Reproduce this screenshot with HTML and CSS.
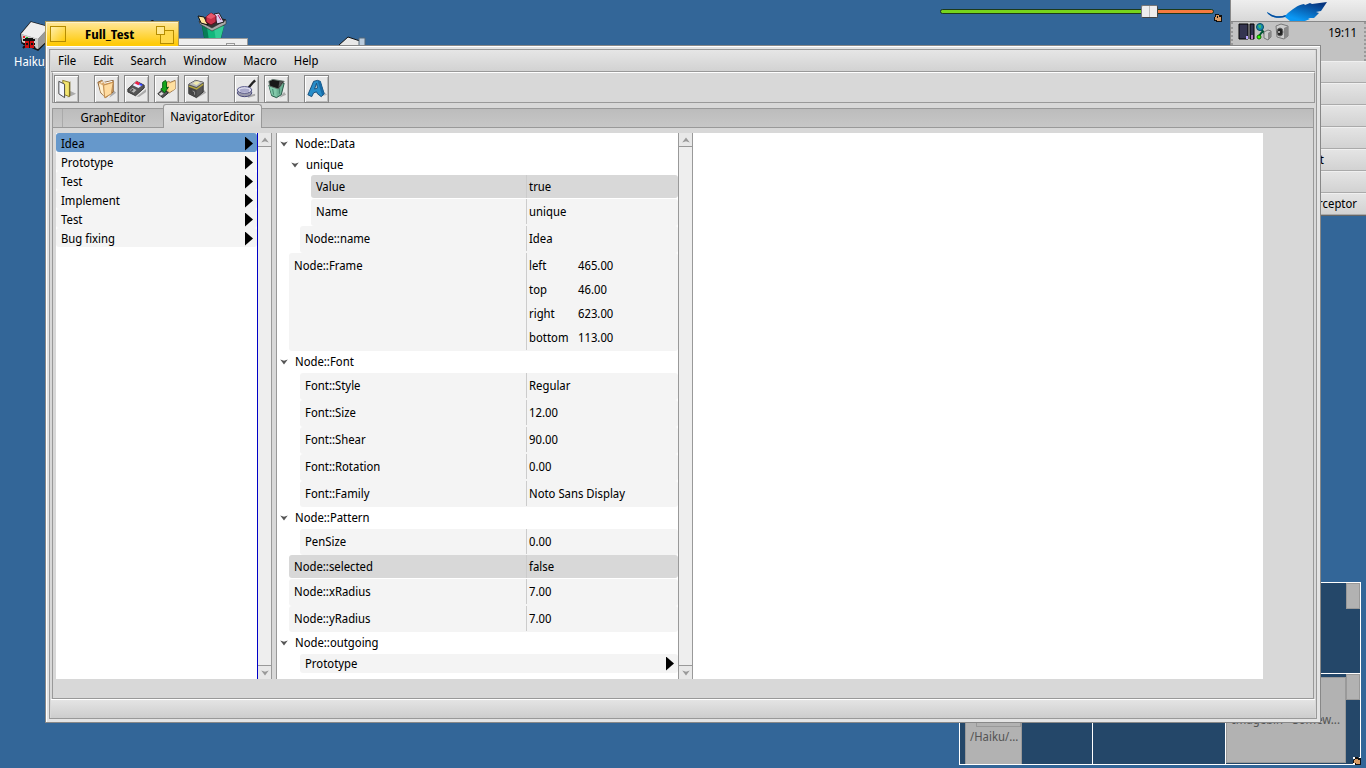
FILE: index.html
```html
<!DOCTYPE html>
<html lang="en">
<head>
<meta charset="utf-8">
<title>Full_Test</title>
<link rel="stylesheet" href="styles.css">
</head>
<body>
<div class="desktop">
  <a class="volume" href="#haiku">
    <svg width="32" height="32" viewBox="0 0 32 32" aria-hidden="true"><path d="M2 14 12 2 30 7V19L19 30 3 23Z" fill="#777" stroke="#151515" stroke-width="1.500"/><path d="M2 14 12 2 30 7 19 19Z" fill="#eee"/><path d="m19 19 11-12v12L19 29Z" fill="#999"/><path d="m2 14 17 5v10L3 22Z" fill="#ccc"/><path d="M4 16h2v2H4Z" fill="#e22"/><path d="M7 17h2v2H7Z" fill="#2b2"/><path d="M4 20h3v-1h6v1h3m-12 4h12m-12 4 2-2m10 2-2-2" fill="none" stroke="#111" stroke-width="2"/><path d="M6 21h9v7H6Z" fill="#c11"/><path d="M7 19h6v2H7Zm3 2h1v7h-1Zm-3 2h2v2H7Zm5 0h2v2h-2Z" fill="#111"/></svg>
    <span>Haiku_</span>
  </a>
  <svg class="trash" width="30" height="30" viewBox="0 0 30 30" aria-label="Trash" role="img"><path d="M5 13 8 30H23L27 13Z" fill="#12b77c" stroke="#063"/><path d="m5 13 5 3 2 14H8Z" fill="#087c58"/><path d="m17 17 2 13h4l4-15Z" fill="#32cc94"/><path d="M2 11 12 4 29 9 15 18Z" fill="#333" stroke="#222"/><path d="m2 10 13 7L29 9v4l-14 7L3 13Z" fill="#aaa" stroke="#333" stroke-width=".6"/><path d="M1 5 7 6 11 14 4 12Z" fill="#ffe49a" stroke="#111"/><path d="m17 3 5-1 5 9-7 2Z" fill="#dce" stroke="#222"/><path d="m9 6 5-4 5 3v6l-5 3-5-3Z" fill="#c93048" stroke="#5b1020"/><path d="m9 6 5-4 5 3-5 3Z" fill="#e8586c"/><path d="m21 4 3 5" stroke="#b26"/></svg>
  <svg class="disk" width="30" height="12" viewBox="0 0 30 12" aria-hidden="true"><path d="M1 10 10 2l12 4v6H1Z" fill="#e8e8e8" stroke="#111"/><path d="M21 3h6v8h-6Z" fill="#bcd" stroke="#567"/></svg>
  <svg class="speck" width="10" height="5" viewBox="0 0 10 5" aria-hidden="true"><path d="M3 4Q5 0 8 4Z" fill="#111"/></svg>
  <div class="volume-slider">
    <input type="range" aria-label="Volume" min="0" max="200" value="157">
    <svg class="hand" width="8" height="8" viewBox="0 0 8 8"><path d="M1 0h4v1h3v7H2V7H0V3h1Z" fill="#111"/><path d="M1 3h1V1h3v2h2v4H3V6H1Z" fill="#d99b64"/><path d="M3 2h1v2H3Z" fill="#111"/></svg>
  </div>

  <div class="workspaces" aria-label="Workspaces">
    <div class="ws"></div><div class="ws"></div><div class="ws"><i class="mini-bar"></i></div>
    <div class="ws"><div class="mini mini-left"><i></i>/Haiku/...</div></div>
    <div class="ws"></div>
    <div class="ws"><div class="mini mini-right">Imagebin - Somew...</div><i class="mini-bar"></i></div>
    <svg class="hand ws-hand" width="8" height="8" viewBox="0 0 8 8"><path d="M1 0h4v1h3v7H2V7H0V3h1Z" fill="#111"/><path d="M0 0h2v2H0Zm0 6h2v2H0Zm6-6h2v1H6Z" fill="#fff"/><path d="M1 3h1V2h3v1h2v4H3V6H1Z" fill="#d99b64"/></svg>
  </div>

  <aside class="deskbar">
    <button class="leaf" aria-label="Deskbar menu"><svg width="62" height="19" viewBox="0 0 62 19"><defs><linearGradient id="lg" x1="0" y1="1" x2="1" y2="0"><stop offset=".3" stop-color="#0a98f4"/><stop offset=".9" stop-color="#06347e"/></linearGradient></defs><path d="M1 10C8 15 14 15 20 13 26 7 32 3 38 2l1 1 5-2 2 1 15-2-6 9-5 1 3 1-5 5h-6l2 1-5 2H24l-5-4C12 17 3 15 1 10Z" fill="url(#lg)"/><path d="M1 10C8 15 14 15 20 13l-1 2C12 17 3 15 1 10Z" fill="#0a4a98"/></svg></button>
    <div class="tray">
      <svg width="52" height="18" viewBox="0 0 52 18" aria-hidden="true"><path d="M1 1h9v15H1Zm11 0h4v15h-4Z" fill="#343450" stroke="#000"/><path d="M8 13h2v3H8Z" fill="#b9a6ff"/><path d="M13 12h2v4h-2Z" fill="#b679bd"/><path d="m22 5 5 6m-6 2 3-4" stroke="#053" fill="none" stroke-width="2"/><circle cx="22" cy="4" r="3.500" fill="#168bb0" stroke="#064b60"/><path d="M20 2h3v3h-2Z" fill="#3bb86a"/><circle cx="21" cy="14" r="2" fill="#3f0" stroke="#160"/><path d="m26 9 4-2 3 1v6l-3 3-4-2Z" fill="#ccc" stroke="#777"/><path d="m30 10 3-2v6l-3 3Z" fill="#888"/><path d="m38 3 5-2 7 2v10l-4 3-7-2Z" fill="#ccc" stroke="#777"/><path d="m46 5 4-2v10l-4 3Z" fill="#888"/><ellipse cx="42" cy="9" rx="3" ry="4" fill="#222" stroke="#666"/><circle cx="41" cy="9" r="1" fill="#ccc"/></svg>
      <time>19:11</time>
    </div>
    <ul class="apps"><li></li><li></li><li></li><li></li><li>Text Edit t</li><li></li><li>Interceptor</li></ul>
  </aside>

  <div class="back-window"><i></i></div>

  <main class="window">
    <header class="tab">
      <button class="close" aria-label="Close"></button>
      <h1>Full_Test</h1>
      <button class="zoom" aria-label="Zoom"><i></i></button>
    </header>
    <div class="frame">
      <div class="inner">
        <nav class="menubar"><button>File</button><button>Edit</button><button>Search</button><button>Window</button><button>Macro</button><button>Help</button></nav>
        <div class="toolbar">
          <button aria-label="New"><svg viewBox="0 0 24 24"><path d="m13 21 9-4-6-3Z" fill="#aaa"/><path d="m8 3 7 2v15l-5-2Z" fill="#f3e571" stroke="#8c7d2a"/><path d="m15 5 1-1v15l-1 1Z" fill="#6b5e1c"/><path d="m4 4 6 3v14l-6-4Z" fill="#f4f6ff" stroke="#444"/></svg></button>
          <button class="far" aria-label="Open"><svg viewBox="0 0 24 24"><path d="m15 21 7-5-3-3Z" fill="#aaa"/><path d="m3 5 4-2 3 2 9-2v12l-8 6-5-5Z" fill="#d9a86b" stroke="#8a6034"/><path d="m4 6 4 2 2 12-4-5Z" fill="#fff0d0"/><path d="m6 6 3-2 1 2 8-2" fill="none" stroke="#fff"/><path d="m9 8 10-3-2 12-7 4Z" fill="#ffdb9f" stroke="#c18d4f"/></svg></button>
          <button aria-label="Save"><svg viewBox="0 0 24 24"><path d="m12 20 10-8v3l-7 5Z" fill="#aaa"/><path d="m3 12 9-8 8 4v3l-9 8-8-4Z" fill="#555" stroke="#333"/><path d="m8 8 4-4 6 4-4 3Z" fill="#eef"/><path d="m10 6 2-2 4 2-2 2Z" fill="#e24"/><path d="m15 7 3 1" stroke="#34f" stroke-width="2"/><path d="m5 13 3-2 4 2-3 3Z" fill="#bbb"/><path d="m6 13 2-1 1 1-2 1Z" fill="#333"/></svg></button>
          <button aria-label="Save as"><svg viewBox="0 0 24 24"><path d="m11 6 3-2 2 1 5-2v9l-6 4-4-3Z" fill="#f5c985" stroke="#9b7548"/><path d="m14 7 7-3v8l-6 3Z" fill="#ffe0a0"/><path d="m3 17 5-5 6 4-6 5Z" fill="#555" stroke="#222"/><path d="m4 17 3-2 2 2-3 2Z" fill="#ddd"/><path d="M8 5 11 3l1 2v6l2-1-4 6-4-4 2-1Z" fill="#16a61b" stroke="#075d12"/></svg></button>
          <button aria-label="Package"><svg viewBox="0 0 24 24"><path d="m13 21 9-5-2-3Z" fill="#aaa"/><path d="M4 7 11 3l8 2v10l-7 6-8-4Z" fill="#555" stroke="#333"/><path d="m4 7 7-4 8 2-7 5Z" fill="#bbb"/><path d="m8 6 4-2 4 1-4 3Z" fill="#eee9b0"/><path d="m4 9 8 3v8l-8-4Z" fill="#444"/><path d="m4 9 8 3 7-5" fill="none" stroke="#b5a73d" stroke-width="1.500"/><path d="m8 14 2 1v3" stroke="#999" fill="none"/></svg></button>
          <button class="group" aria-label="Pan"><svg viewBox="0 0 24 24"><path d="m12 19 9-2v2l-7 2Z" fill="#aaa"/><path d="m13 12 5-6 3-3" stroke="#222" stroke-width="2.500" fill="none"/><ellipse cx="10" cy="16" rx="7.500" ry="4" fill="#99a" stroke="#447"/><ellipse cx="10" cy="13" rx="7.500" ry="3.500" fill="#dde" stroke="#558"/><ellipse cx="10" cy="13.500" rx="5" ry="2" fill="#aac"/></svg></button>
          <button aria-label="Delete"><svg viewBox="0 0 24 24"><path d="m15 21 7-3-2-3Z" fill="#aaa"/><path d="m4 8 3 11 5 2 5-3 3-12Z" fill="#6eb497" stroke="#245443"/><path d="m4 8 8 3v9l-5-2Z" fill="#82c9aa"/><path d="m8 12 1 6m6-8v7" stroke="#3f836b"/><path d="m4 4 4-2 12 2-6 8-9-3Z" fill="#181818" stroke="#65776f"/><path d="m15 4 4 0-5 7Z" fill="#555"/></svg></button>
          <button class="far" aria-label="Font"><svg viewBox="0 0 24 24"><path d="m16 20 7-2-3-3Z" fill="#bbb"/><path fill-rule="evenodd" d="M3 18 9 4l4-1 3 1 4 13-3 3-4-3-1-2-3 1-2 4Zm7-6 3-1-1-5Z" fill="#278dc9" stroke="#174c78"/><path d="m13 3 3 1 4 13-2 2Z" fill="#196ba6"/></svg></button>
        </div>
        <section class="tabview">
          <div class="tabs" role="tablist"><button role="tab" aria-selected="false">GraphEditor</button><button role="tab" aria-selected="true" class="active">NavigatorEditor</button></div>
          <div class="panes">
            <ul class="list">
              <li class="on">Idea<b></b></li><li>Prototype<b></b></li><li>Test<b></b></li><li>Implement<b></b></li><li>Test<b></b></li><li>Bug fixing<b></b></li>
            </ul>
            <div class="scroll"><button aria-label="Up"><svg viewBox="0 0 8 8"><path d="m1 6 3-4 3 4-3-1Z"/></svg></button><button aria-label="Down"><svg viewBox="0 0 8 8"><path d="m1 2 3 4 3-4-3 1Z"/></svg></button></div>
            <div class="tree">
              <div class="head"><svg viewBox="0 0 8 8"><path d="m1 2 3 4 3-4-3 1Z"/></svg>Node::Data</div>
              <div class="head sub"><svg viewBox="0 0 8 8"><path d="m1 2 3 4 3-4-3 1Z"/></svg>unique</div>
              <div class="row deep dark"><span>Value</span><span class="val">true</span></div>
              <div class="row deep"><span>Name</span><span class="val">unique</span></div>
              <div class="row nest"><span>Node::name</span><span class="val">Idea</span></div>
              <div class="row tall"><span>Node::Frame</span><dl class="val"><dt>left</dt><dd>465.00</dd><dt>top</dt><dd>46.00</dd><dt>right</dt><dd>623.00</dd><dt>bottom</dt><dd>113.00</dd></dl></div>
              <div class="head"><svg viewBox="0 0 8 8"><path d="m1 2 3 4 3-4-3 1Z"/></svg>Node::Font</div>
              <div class="row nest"><span>Font::Style</span><span class="val">Regular</span></div>
              <div class="row nest"><span>Font::Size</span><span class="val">12.00</span></div>
              <div class="row nest"><span>Font::Shear</span><span class="val">90.00</span></div>
              <div class="row nest"><span>Font::Rotation</span><span class="val">0.00</span></div>
              <div class="row nest last"><span>Font::Family</span><span class="val">Noto Sans Display</span></div>
              <div class="head"><svg viewBox="0 0 8 8"><path d="m1 2 3 4 3-4-3 1Z"/></svg>Node::Pattern</div>
              <div class="row nest last"><span>PenSize</span><span class="val">0.00</span></div>
              <div class="row dark"><span>Node::selected</span><span class="val">false</span></div>
              <div class="row"><span>Node::xRadius</span><span class="val">7.00</span></div>
              <div class="row last"><span>Node::yRadius</span><span class="val">7.00</span></div>
              <div class="head"><svg viewBox="0 0 8 8"><path d="m1 2 3 4 3-4-3 1Z"/></svg>Node::outgoing</div>
              <div class="row nest link"><span>Prototype</span><b></b></div>
            </div>
            <div class="scroll"><button aria-label="Up"><svg viewBox="0 0 8 8"><path d="m1 6 3-4 3 4-3-1Z"/></svg></button><button aria-label="Down"><svg viewBox="0 0 8 8"><path d="m1 2 3 4 3-4-3 1Z"/></svg></button></div>
            <div class="canvas"></div>
          </div>
        </section>
        <footer class="status"></footer>
      </div>
    </div>
  </main>
</div>
</body>
</html>
```
FILE: styles.css
```css
* { box-sizing: border-box; }
body { margin: 0; font: 12px/16px "Noto Sans Display", "Noto Sans", "Open Sans", sans-serif; color: #000; }
button { font: inherit; color: inherit; border: 0; padding: 0; margin: 0; background: none; }
ul, dl, dd, h1 { margin: 0; padding: 0; list-style: none; }
.desktop { position: relative; min-height: 100vh; background: #336698; overflow: hidden; }

/* desktop icons */
.volume { position: absolute; left: 14px; top: 20px; color: #fff; text-decoration: none; display: flex; flex-direction: column; }
.volume svg { margin-left: 5px; }
.volume span { line-height: 20px; }
.trash { position: absolute; left: 197px; top: 11px; }
.disk { position: absolute; left: 338px; top: 35px; }
.speck { position: absolute; left: 147px; top: 18px; }
.volume-slider { position: absolute; right: 144px; top: 2px; width: 282px; display: flex; align-items: flex-end; }
.volume-slider input { appearance: none; flex: 1; height: 18px; margin: 0 0 2px; background: none; }
.volume-slider input::-webkit-slider-runnable-track { height: 5px; border: 1px solid #1d3a1a; border-radius: 3px; background: linear-gradient(90deg, #76d51c 77%, #f67a3f 77%); }
.volume-slider input::-webkit-slider-thumb { appearance: none; width: 17px; height: 13px; margin-top: -5px; background: linear-gradient(90deg, transparent 7px, #bbb 7px, #bbb 8px, transparent 8px), #eee; border: 1px solid #777; border-right-color: #444; border-bottom-color: #444; border-radius: 2px; }

/* workspaces replicant */
.workspaces { position: absolute; right: 5px; bottom: 3px; width: 402px; height: 183px; display: grid; grid-template-columns: 132px 132px 1fr; grid-template-rows: 1fr 1fr; gap: 1px; border: 1px solid #fff; background: #fff; }
.ws { position: relative; background: #244769; overflow: hidden; }
.mini { position: absolute; background: #b2b2b2; color: #555; border: 1px solid #999; }
.mini-left { left: 5px; bottom: -1px; width: 57px; height: 90px; padding: 53px 0 0 4px; }
.mini-left i { position: absolute; left: 10px; top: 0; right: 0; height: 51px; border: 1px solid #999; }
.mini-right { left: 0; bottom: 1px; width: 120px; height: 86px; padding: 34px 0 0 5px; white-space: nowrap; }
.mini-bar { position: absolute; right: 0; top: 0; width: 14px; height: 26px; background: #b2b2b2; border: 1px solid #999; }
.ws-hand { position: absolute; right: -1px; bottom: -1px; }

/* deskbar */
.deskbar { position: absolute; right: 0; top: 0; width: 136px; border-left: 1px solid #888; border-bottom: 1px solid #666; }
.leaf { display: block; width: 100%; height: 22px; background: linear-gradient(#eee, #d8d8d8); border-bottom: 1px solid #888; }
.leaf svg { display: block; margin: 2px 0 0 35px; }
.tray { height: 39px; background: #c2c2c2; display: flex; justify-content: space-between; align-items: flex-start; padding: 1px 7px 0 5px; border-left: 2px dotted #999; border-right: 2px dotted #999; }
.tray time { margin-top: 2px; }
.apps li { height: 22px; text-align: right; padding: 2px 9px 0 0; background: linear-gradient(#e4e4e4, #d2d2d2); border-top: 1px solid #f0f0f0; border-bottom: 1px solid #aaa; }
.apps li:nth-child(5) { padding-right: 42px; }

.back-window { position: absolute; left: 160px; top: 38px; width: 88px; height: 20px; background: #eee; border: 1px solid #999; }
.back-window i { position: absolute; right: 12px; top: 4px; width: 9px; height: 9px; border: 1px solid #999; }

/* main window */
.window { position: absolute; left: 45px; right: 45px; top: 21px; bottom: 45px; display: flex; flex-direction: column; }
.tab { position: relative; align-self: flex-start; display: flex; align-items: center; gap: 19px; width: 134px; height: 25px; padding: 0 6px 0 4px; border: 1px solid #ae9a5a; border-bottom: 0; background: linear-gradient(#ffe79b, #ffcb0b 90%); box-shadow: inset 1px 1px #fff3c8; }
.tab h1 { flex: 1; padding-top: 1px; font-size: 12px; line-height: 16px; }
.close { width: 16px; height: 16px; border: 1px solid #b58c00; background: linear-gradient(135deg, #ffefb0, #ffcb0b); }
.zoom { position: relative; width: 16px; height: 16px; }
.zoom::before { content: ""; position: absolute; left: 4px; top: 4px; width: 12px; height: 12px; border: 1px solid #b58c00; background: #ffd94c; }
.zoom i { position: absolute; left: 0; top: 0; width: 9px; height: 9px; border: 1px solid #b58c00; background: #ffe890; }
.frame { flex: 1; min-height: 0; margin-top: -1px; display: flex; border: 1px solid #888; background: #e4e4e4; padding: 3px; box-shadow: inset 1px 1px #fff; }
.inner { flex: 1; min-width: 0; display: flex; flex-direction: column; border: 1px solid #999; padding: 0 1px; background: #d8d8d8; }
.menubar { height: 22px; display: flex; gap: 17px; padding: 0 7px; background: linear-gradient(#e6e6e6, #d2d2d2); border-bottom: 1px solid #999; }
.toolbar { display: flex; align-items: flex-start; gap: 5px; height: 31px; margin-left: 1px; padding: 2px 0 0 1px; border: 1px solid #999; border-top-color: #fff; }
.toolbar button { width: 25px; height: 28px; border: 1px solid #888; background: #e8e8e8; box-shadow: inset 1px 1px #fff, inset -1px -1px #bbb; }
.toolbar svg { display: block; width: 23px; height: 24px; }
.toolbar .far { margin-left: 10px; }
.toolbar .group { margin-left: 20px; }
.tabview { flex: 1; min-height: 0; display: flex; flex-direction: column; margin: 5px 1px 0; border: 1px solid #999; }
.tabs { display: flex; align-items: flex-end; height: 19px; padding-left: 9px; background: linear-gradient(#bcbcbc, #c7c7c7); border-bottom: 1px solid #999; }
.tabs button { width: 101px; height: 18px; border-left: 1px solid #aaa; }
.tabs .active { width: 99px; height: 24px; margin-bottom: -1px; background: linear-gradient(#e8e8e8, #d8d8d8); border: 1px solid #999; border-bottom: 0; border-radius: 3px 3px 0 0; }
.panes { flex: 1; min-height: 0; display: flex; padding: 5px 50px 19px 3px; }
.list { width: 202px; background: #fff; border-right: 1px solid #0000c8; }
.list li { display: flex; justify-content: space-between; align-items: center; height: 19px; padding: 2px 4px 0 5px; background: #f4f4f4; border-radius: 3px; }
.list .on { background: #6698cb; }
b { width: 8px; height: 14px; background: #000; clip-path: polygon(0 0, 100% 50%, 0 100%); }
.scroll { width: 14px; display: flex; flex-direction: column; justify-content: space-between; background: #eee; border-right: 1px solid #999; }
.scroll button { height: 14px; display: flex; align-items: center; justify-content: center; border-bottom: 1px solid #999; background: #e8e8e8; }
.scroll button:last-child { border-bottom: 0; border-top: 1px solid #999; }
.scroll svg { width: 10px; height: 10px; fill: #999; }
.tree { width: 403px; margin-left: 4px; padding-left: 12px; background: #fff; border-left: 1px solid #999; border-right: 1px solid #999; }
.head { display: flex; align-items: center; height: 22px; margin-left: -10px; gap: 6px; }
.head svg { width: 10px; height: 10px; fill: #555; }
.head.sub { height: 20px; margin-left: 1px; }
.row { display: flex; justify-content: space-between; align-items: center; height: 27px; padding: 0 0 2px 5px; background: #f4f4f4; border-radius: 3px; }
.row .val { width: 152px; align-self: stretch; display: flex; align-items: center; padding-left: 2px; border-left: 1px solid #ccc; }
.nest { margin-left: 11px; }
.deep { margin-left: 22px; }
.last { height: 26px; padding-bottom: 1px; }
.dark { height: 23px; margin-bottom: 1px; padding-bottom: 0; background: #d8d8d8; }
.tall { height: 98px; padding-bottom: 1px; align-items: flex-start; }
.tall > span { padding-top: 5px; }
.row dl.val { display: grid; grid-template-columns: 49px 1fr; grid-auto-rows: 24px; align-items: center; padding-top: 1px; }
.link { height: 19px; padding: 0 4px 0 5px; }
.canvas { flex: 1; background: #fff; }
.status { height: 19px; border-top: 1px solid #fff; background: linear-gradient(#e4e4e4, #cdcdcd); }
```
